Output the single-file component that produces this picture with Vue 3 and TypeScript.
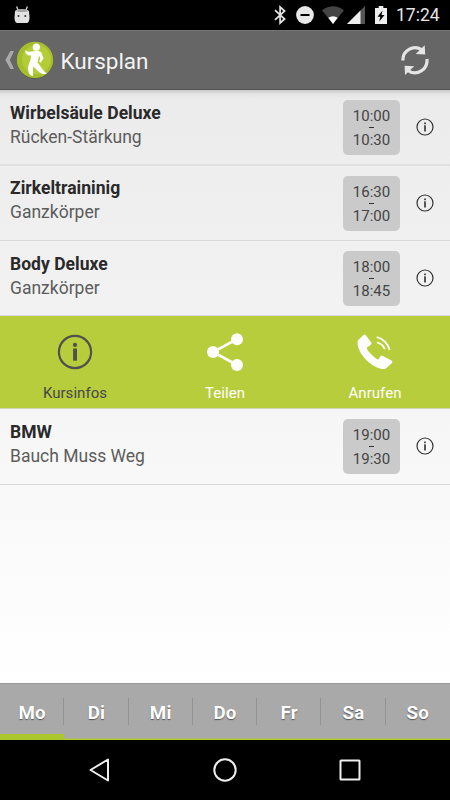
<script setup lang="ts">
import { ref } from 'vue'

interface Course {
  title: string
  subtitle: string
  start: string
  end: string
}

const courses: Course[] = [
  { title: 'Wirbelsäule Deluxe', subtitle: 'Rücken-Stärkung', start: '10:00', end: '10:30' },
  { title: 'Zirkeltraininig', subtitle: 'Ganzkörper', start: '16:30', end: '17:00' },
  { title: 'Body Deluxe', subtitle: 'Ganzkörper', start: '18:00', end: '18:45' },
  { title: 'BMW', subtitle: 'Bauch Muss Weg', start: '19:00', end: '19:30' },
]
const days = ['Mo', 'Di', 'Mi', 'Do', 'Fr', 'Sa', 'So']

const activeDay = ref(0)
const openCourse = ref(2)
</script>

<template>
  <div class="screen">
    <div class="status">
      <svg class="robot" width="18" height="20" viewBox="0 0 18 20">
        <path d="M3.600 1.500 5 5M14.400 1.500 13 5" stroke="#d8d8d8" stroke-width="1.300" />
        <path d="M2 6.500C2.500 3.600 15.500 3.600 16 6.500L16.500 12.500C16.500 16 15.500 18 13.500 18H4.500C2.500 18 1.500 16 1.500 12.500Z" fill="#e2e2e2" />
        <path d="M2.800 6.300C4 3.600 14 3.600 15.200 6.300 13 7.300 5 7.300 2.800 6.300Z" fill="#a5a5a5" />
        <circle cx="5.500" cy="11" r="1" fill="#333" /><circle cx="12.300" cy="11" r="1" fill="#333" />
      </svg>
      <svg class="bt" width="12" height="20" viewBox="0 0 12 20" fill="none" stroke="#e4e4e4" stroke-width="1.700">
        <path d="M1 5.200 10.600 14 6.100 18V2L10.600 6 1 14.800" />
      </svg>
      <svg class="dnd" width="18" height="18" viewBox="0 0 18 18">
        <circle cx="9" cy="9" r="8.900" fill="#e8e8e8" /><path d="M4.500 9H13.500" stroke="#000" stroke-width="2" />
      </svg>
      <svg class="wifi" width="22" height="18" viewBox="0 0 22 18">
        <path d="M0 4.200Q11-3.600 22 4.200L11 18Z" fill="#444" />
        <path d="M6.300 11.800Q11 8.500 15.700 11.800L11 18Z" fill="#fff" />
      </svg>
      <svg class="signal" width="18" height="18" viewBox="0 0 18 18">
        <path d="M0 18 18 0V18Z" fill="#555" /><path d="M0 18 13.500 4.500V18Z" fill="#eee" />
      </svg>
      <svg class="battery" width="12" height="18" viewBox="0 0 12 18">
        <path d="M3.700 0H8.300V2H12V18H0V2H3.700Z" fill="#eee" />
        <path d="M7.500 4.500 2.500 10.800H5.300L4.300 15.500 9.500 9H6.500Z" fill="#000" />
      </svg>
      <span class="clock">17:24</span>
    </div>

    <header class="header">
      <svg class="back" width="10" height="20" viewBox="0 0 10 20">
        <path d="M5.500 1H9L4.800 10 9 19H5.500L.3 10Z" fill="#aaa" />
      </svg>
      <svg class="logo" width="38" height="38" viewBox="0 0 38 38">
        <circle cx="19" cy="19.300" r="18.300" fill="#565b47" />
        <circle cx="19" cy="18.900" r="18.200" fill="#a5bf2c" />
        <circle cx="20.500" cy="18.500" r="14.500" fill="#b4cc36" />
        <circle cx="20.300" cy="6.200" r="3.600" fill="#fff" />
        <path d="M9.500 8.900C11.500 11.500 14 10.500 17.500 10.200 20.500 9.500 24 9.800 25.500 11.800L27.600 17.300 24.700 21.800 23.200 20.700 24.300 17 23.100 14.800 21.500 21.500C24.500 24.500 26 29 31 32.500L27.300 33.300C22 31 20 28 17.400 25.500 16.300 29 18 33.500 16.500 35.300 12.500 33.500 12.500 31 12 27.500 12 23 14.800 21 15 14.400 12 15 8.500 12.500 9.500 8.900Z" fill="#fff" />
      </svg>
      <h1>Kursplan</h1>
      <svg class="refresh" width="30" height="32" viewBox="0 0 30 32">
        <g fill="none" stroke="#e5e5e5" stroke-width="3.200">
          <path d="M2.900 15.500A12 12.300 0 0 1 21.500 4.700" /><path d="M26.900 14A12 12.300 0 0 1 8.300 25.700" />
        </g>
        <path d="M24.700 .2 25.200 9.600 15.700 8.900ZM5 30 4.600 20.700 14.200 21.200Z" fill="#e5e5e5" />
      </svg>
    </header>

    <main class="content">
      <template v-for="(course, i) in courses" :key="course.title">
        <article class="course">
          <div class="names">
            <h2>{{ course.title }}</h2>
            <p>{{ course.subtitle }}</p>
          </div>
          <div class="time">
            <span>{{ course.start }}</span>
            <i class="dash"></i>
            <span>{{ course.end }}</span>
          </div>
          <svg class="info" width="18" height="18" viewBox="0 0 18 18">
            <circle cx="9" cy="9" r="8" fill="none" stroke="#333" stroke-width="1.200" />
            <rect x="8.100" y="4.500" width="1.800" height="1.700" fill="#444" />
            <rect x="8.100" y="7.300" width="1.800" height="6.200" fill="#444" />
          </svg>
        </article>
        <div v-if="i === openCourse" class="actions">
          <div class="action dark">
            <svg width="40" height="40" viewBox="0 0 40 40">
              <circle cx="20" cy="20" r="16.100" fill="none" stroke="#505050" stroke-width="2.200" />
              <circle cx="20" cy="12.900" r="2.100" fill="#505050" />
              <rect x="18.100" y="16.500" width="3.900" height="12.200" fill="#505050" />
            </svg>
            <span>Kursinfos</span>
          </div>
          <div class="action">
            <svg width="40" height="40" viewBox="0 0 40 40">
              <path d="M32 7.200 8 20 32 33" fill="none" stroke="#fff" stroke-width="2.600" />
              <g fill="#fff"><circle cx="32" cy="7.200" r="6" /><circle cx="8" cy="20" r="6" /><circle cx="32" cy="33" r="6" /></g>
            </svg>
            <span>Teilen</span>
          </div>
          <div class="action">
            <svg width="40" height="40" viewBox="0 0 40 40">
              <path d="M3 8.300 8.300 3.200Q9.800 1.900 11 3.400L16.200 10.500Q17 11.800 15.800 12.800L12 15.400C10.400 17.500 21.200 27.500 23.400 27.500L25.600 24Q26.600 23.200 27.900 24L36.500 28.500Q38 29.500 37 31L32 35.500C30.500 37 28.500 37.500 26 36.800 16 34.500 3.500 22.500 2.600 12Q2.300 9.500 3 8.300Z" fill="#fff" />
              <path d="M21.700 5.100C28 6.500 33.500 12 34.700 18M22 10.300C25.800 11.300 28.800 14 29.900 17.300" fill="none" stroke="#fff" stroke-width="1.900" />
            </svg>
            <span>Anrufen</span>
          </div>
        </div>
      </template>
    </main>

    <nav class="days">
      <button v-for="(day, i) in days" :key="day" :class="{ active: i === activeDay }" @click="activeDay = i">{{ day }}</button>
    </nav>

    <footer class="system">
      <svg width="26" height="26" viewBox="0 0 26 26"><path d="M21 2.500V23.500L3.500 13Z" /></svg>
      <svg width="26" height="26" viewBox="0 0 26 26"><circle cx="13" cy="13" r="10.700" /></svg>
      <svg width="26" height="26" viewBox="0 0 26 26"><rect x="3.500" y="3.500" width="19" height="19" rx=".5" /></svg>
    </footer>
  </div>
</template>

<style>
body { margin: 0; }
</style>

<style scoped>
.screen { width: 450px; height: 800px; display: flex; flex-direction: column; overflow: hidden; font-family: Roboto, sans-serif; background: #000; }
svg { display: block; flex: none; }
h1, h2, p { margin: 0; font-weight: 400; }
.status { height: 30px; flex: none; display: flex; align-items: center; padding: 0 9px 0 13px; box-sizing: border-box; background: #000; }
.robot { margin-top: -1px; }
.bt { margin-left: auto; }
.dnd { margin-left: 10px; }
.wifi { margin-left: 8px; }
.signal { margin-left: 2.500px; }
.battery { margin-left: 10px; }
.clock { margin-left: 9.500px; width: 45px; color: #e6e6e6; font-size: 17.500px; font-weight: 400; line-height: 31px; white-space: nowrap; }
.header { height: 60px; flex: none; box-sizing: border-box; display: flex; align-items: center; padding: 0 20px 0 5px; background: #666; border-top: 1px solid #747474; border-bottom: 1px solid #575257; }
.logo { margin-left: 1px; }
.header h1 { margin: 2px 0 0 6.500px; color: #f3f3f3; font-size: 22.500px; line-height: 30px; letter-spacing: -.05px; }
.refresh { margin: 2px 0 0 auto; }
.content { flex: 1; background: linear-gradient(#c8c8c8 0, rgba(220, 220, 220, .5) 4px, rgba(235, 235, 235, 0) 9px), linear-gradient(#ebebeb, #fff); }
.course { height: 75px; box-sizing: border-box; display: flex; align-items: flex-start; padding: 10px 16px 0 10px; border-bottom: 1px solid #d9d9d9; }
.course:first-child, .course:last-child { height: 76px; }
.course:first-child { border-bottom: 2px solid #e0e0e0; }
.course:nth-child(2) .names { padding-top: 0; }
.names { flex: 1; padding-top: 1px; }
.names h2 { color: #292929; font-size: 17.500px; font-weight: 700; line-height: 24px; letter-spacing: .03px; }
.names p { color: #5c5c5c; font-size: 17.500px; line-height: 24px; }
.time { width: 57px; height: 55px; box-sizing: border-box; padding-top: 7px; border-radius: 5px; background: #cacaca; display: flex; flex-direction: column; align-items: center; color: #444; font-size: 15px; line-height: 18px; }
.dash { width: 5px; height: 1px; margin: 2px 0 3px; background: #333; }
.info { margin: 18px 0 0 16px; }
.actions { height: 93px; box-sizing: border-box; display: flex; background: #b8cd3b; border-bottom: 1px solid #d0d4b8; }
.action { flex: 1; display: flex; flex-direction: column; align-items: center; padding-top: 16px; color: #fff; font-size: 15px; line-height: 20px; }
.action span { margin-top: 11px; letter-spacing: .05px; }
.action.dark { color: #464650; }
.days { height: 57px; flex: none; display: flex; background: #a9a9a9; border-top: 1px solid #999; box-sizing: border-box; }
.days button { position: relative; box-sizing: border-box; flex: 1; height: 56px; padding: 2px 0 0; border: 0; border-bottom: 1px solid #b3d019; background: none; box-shadow: inset 0 -1px rgba(179, 208, 25, .3); color: #fff; font: 700 18.750px/54px Roboto, sans-serif; letter-spacing: .2px; text-shadow: 0 1px 1px #555; }
.days button.active { border-bottom-color: #abc72b; box-shadow: inset 0 -5px #abc72b; }
.days button:not(:last-child)::after { content: ''; position: absolute; right: 0; top: 14px; width: 1px; height: 27px; background: #939393; }
.system { height: 60px; flex: none; display: flex; justify-content: space-between; padding: 17px 87px 0; box-sizing: border-box; background: #000; }
.system svg { fill: none; stroke: #eee; stroke-width: 2; stroke-linejoin: round; }
</style>
